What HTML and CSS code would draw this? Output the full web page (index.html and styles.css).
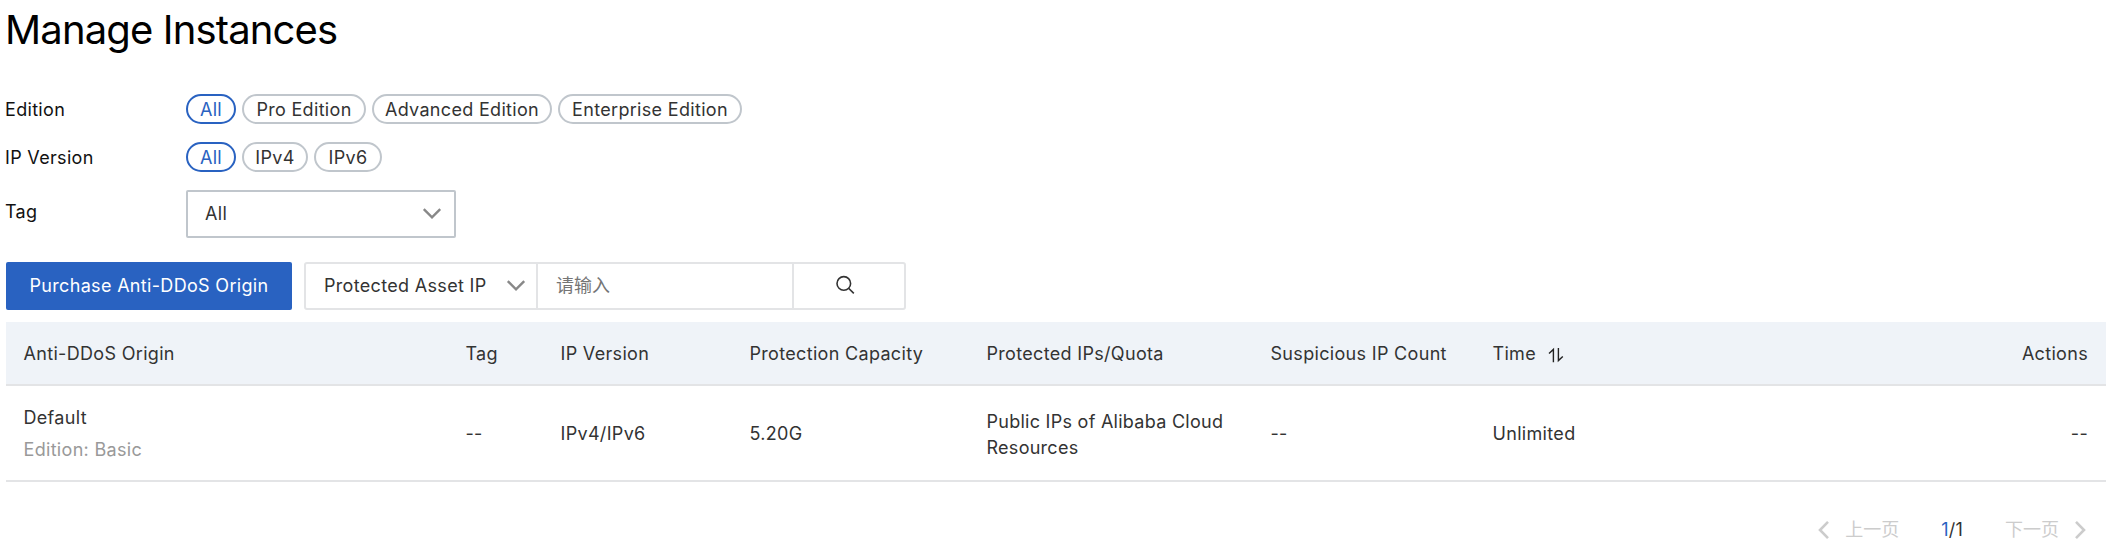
FILE: index.html
```html
<!DOCTYPE html>
<html lang="en">
<head>
<meta charset="utf-8">
<title>Manage Instances</title>
<link rel="stylesheet" href="styles.css">
</head>
<body>
<main class="page">
  <h1 class="title">Manage Instances</h1>

  <section class="filters">
    <div class="filter">
      <span class="filter-label">Edition</span>
      <div class="tags">
        <span class="tag active w-all">All</span>
        <span class="tag w-pro">Pro Edition</span>
        <span class="tag w-adv">Advanced Edition</span>
        <span class="tag w-ent">Enterprise Edition</span>
      </div>
    </div>
    <div class="filter">
      <span class="filter-label">IP Version</span>
      <div class="tags">
        <span class="tag active w-all">All</span>
        <span class="tag w-v4">IPv4</span>
        <span class="tag w-v6">IPv6</span>
      </div>
    </div>
    <div class="filter">
      <span class="filter-label label-tag">Tag</span>
      <div class="select">
        <span>All</span>
        <svg class="chevron" width="20" height="12" viewBox="0 0 20 12"><path d="M1.8 1.2 10 9.4 18.2 1.2"/></svg>
      </div>
    </div>
  </section>

  <section class="toolbar">
    <button class="primary">Purchase Anti-DDoS Origin</button>
    <div class="search">
      <div class="search-type">
        <span>Protected Asset IP</span>
        <svg class="chevron" width="20" height="12" viewBox="0 0 20 12"><path d="M1.8 1.2 10 9.4 18.2 1.2"/></svg>
      </div>
      <div class="search-input">请输入</div>
      <div class="search-button">
        <svg class="glass" width="20" height="20" viewBox="0 0 20 20"><circle cx="8.8" cy="8.4" r="6.8"/><path d="M13.6 13.2 18.8 18.4"/></svg>
      </div>
    </div>
  </section>

  <section class="table">
    <div class="row head">
      <div>Anti-DDoS Origin</div>
      <div>Tag</div>
      <div>IP Version</div>
      <div>Protection Capacity</div>
      <div>Protected IPs/Quota</div>
      <div>Suspicious IP Count</div>
      <div class="sortable">Time
        <svg class="sort" width="16" height="16" viewBox="0 0 16 16"><path d="M1 6.6 5.4 2.4V15.2M10.4 1V13.6L14.8 9.4"/></svg>
      </div>
      <div class="right">Actions</div>
    </div>
    <div class="row body">
      <div class="instance"><span>Default</span><span class="muted">Edition: Basic</span></div>
      <div>--</div>
      <div>IPv4/IPv6</div>
      <div>5.20G</div>
      <div class="quota">Public IPs of Alibaba Cloud<br>Resources</div>
      <div>--</div>
      <div>Unlimited</div>
      <div class="right">--</div>
    </div>
  </section>

  <nav class="pager">
    <span class="step">
      <svg class="arrow" width="12" height="20" viewBox="0 0 12 20"><path d="M10 1.8 2 10 10 18.2"/></svg>
      <span>上一页</span>
    </span>
    <span class="count"><span class="current">1</span>/1</span>
    <span class="step">
      <span>下一页</span>
      <svg class="arrow" width="12" height="20" viewBox="0 0 12 20"><path d="M2 1.8 10 10 2 18.2"/></svg>
    </span>
  </nav>
</main>
</body>
</html>
```
FILE: styles.css
```css
* { box-sizing: border-box; }

body {
  margin: 0;
  background: #fff;
  color: #333;
  font: 400 18px/26px Inter, "Noto Sans CJK SC", sans-serif;
  letter-spacing: 0.32px;
}

.page {
  width: 2118px;
  height: 552px;
  padding: 0 12px 0 6px;
  overflow: hidden;
}

.title {
  margin: 0 0 0 -1px;
  height: 94px;
  padding-top: 6px;
  color: #000;
  font-size: 40px;
  font-weight: 400;
  line-height: 48px;
  letter-spacing: -0.85px;
}

.filters {
  display: flex;
  flex-direction: column;
  gap: 18px;
}

.filter {
  display: flex;
  align-items: center;
}

.filter-label {
  width: 181px;
  margin-left: -1px;
  padding-top: 2px;
  color: #111;
}

.label-tag {
  padding: 0 0 4px;
}

.tags {
  display: flex;
  gap: 6px;
}

.tag {
  height: 30px;
  border: 2px solid #c0c6cc;
  border-radius: 15px;
  line-height: 27px;
  text-align: center;
  white-space: nowrap;
}

.tag.active {
  border-color: #2962c1;
  color: #2962c1;
}

.w-all { width: 50px; }
.w-pro { width: 124px; }
.w-adv { width: 180px; }
.w-ent { width: 184px; }
.w-v4 { width: 66px; }
.w-v6 { width: 68px; }

.select {
  display: flex;
  align-items: center;
  justify-content: space-between;
  width: 270px;
  height: 48px;
  padding: 0 12px 0 17px;
  border: 2px solid #c0c6cc;
  border-radius: 2px;
}

.chevron {
  fill: none;
  stroke: #888;
  stroke-width: 2.4;
}

.toolbar {
  display: flex;
  gap: 12px;
  margin-top: 24px;
}

.primary {
  width: 286px;
  height: 48px;
  padding: 0;
  border: 0;
  border-radius: 2px;
  background: #2962c1;
  color: #fff;
  font: inherit;
  letter-spacing: inherit;
}

.search {
  display: flex;
  width: 602px;
  height: 48px;
  border: 2px solid #e3e4e6;
  border-radius: 3px;
}

.search-type {
  display: flex;
  align-items: center;
  justify-content: space-between;
  width: 232px;
  padding: 0 10px 0 18px;
  border-right: 2px solid #e3e4e6;
  white-space: nowrap;
}

.search-input {
  width: 256px;
  padding-left: 18px;
  border-right: 2px solid #e3e4e6;
  color: #757575;
  line-height: 44px;
  letter-spacing: 0;
}

.search-button {
  display: flex;
  flex: 1;
  align-items: center;
  justify-content: center;
  padding: 0 8px 2px 0;
}

.glass {
  fill: none;
  stroke: #333;
  stroke-width: 1.6;
}

.table { margin-top: 12px; }

.row {
  display: grid;
  grid-template-columns: 442px 95px 189px 237px 284px 222px 240px 1fr;
  align-items: center;
  padding: 2px 18px 0 17.5px;
  border-bottom: 2px solid #e3e4e6;
}

.head {
  height: 64px;
  background: #eff3f8;
}

.body { height: 96px; }

.right { text-align: right; }

.sortable {
  display: flex;
  align-items: center;
  gap: 12px;
}

.sort {
  margin-top: 2px;
  fill: none;
  stroke: #222;
  stroke-width: 1.4;
}

.instance {
  display: flex;
  flex-direction: column;
  gap: 6px;
}

.muted { color: #999; }

.quota {
  padding-top: 2px;
  letter-spacing: 0.27px;
}

.pager {
  display: flex;
  align-items: center;
  justify-content: flex-end;
  gap: 42px;
  margin-top: 35px;
  padding-right: 20px;
}

.step {
  display: flex;
  align-items: center;
  gap: 15px;
  color: #ccc;
  letter-spacing: 0;
}

.arrow {
  fill: none;
  stroke: #ccc;
  stroke-width: 2.6;
}

.count { letter-spacing: 0.2px; }

.current { color: #2962c1; }
```
